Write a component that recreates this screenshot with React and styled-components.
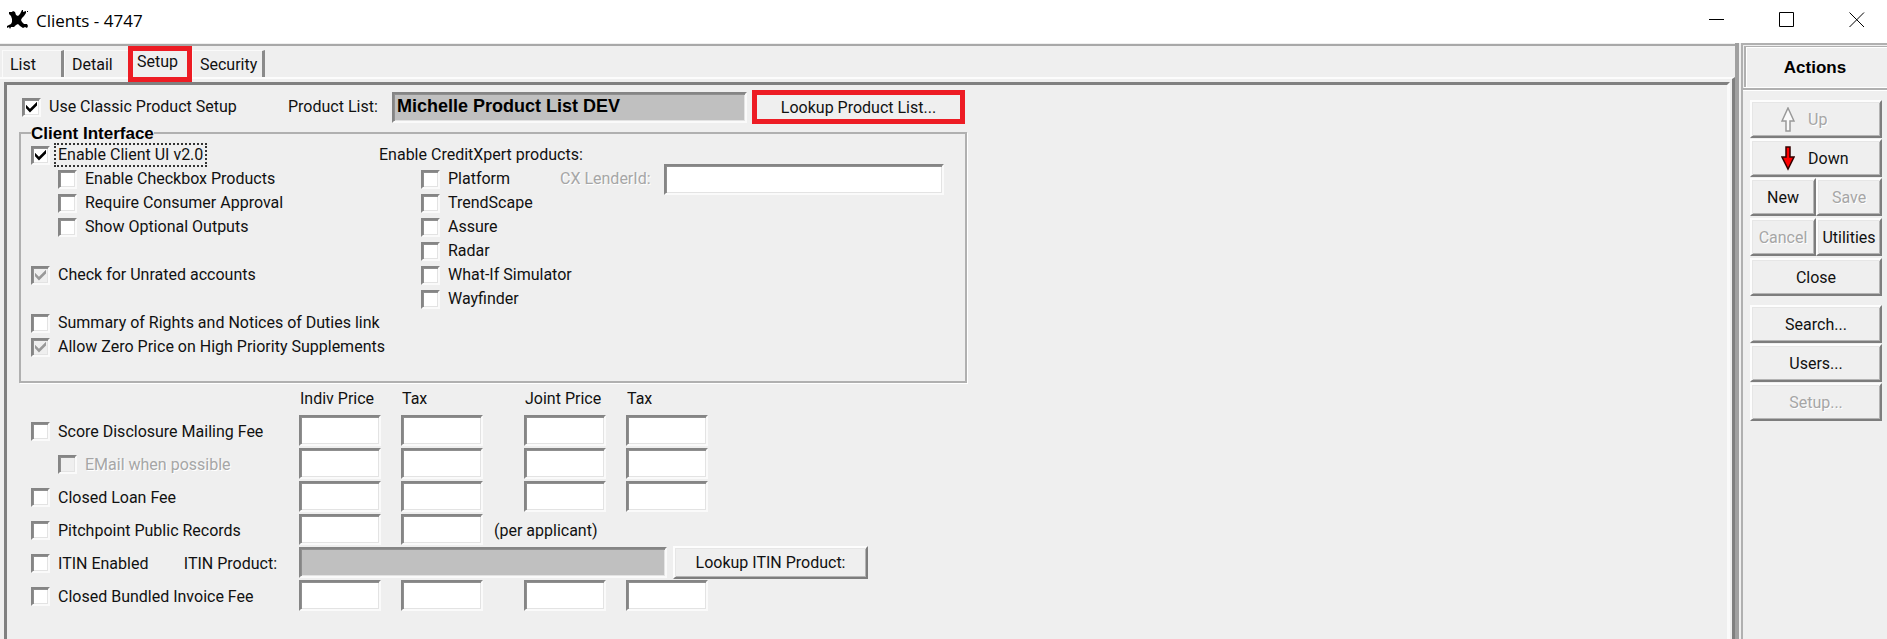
import React from 'react';
import styled, { createGlobalStyle, css } from 'styled-components';

const Global = createGlobalStyle`
  *, *::before, *::after { box-sizing: border-box; }
  body { margin: 0; background: #efefef; }
  body, button, input { font-family: Roboto, "Liberation Sans", sans-serif; font-size: 16px; line-height: 20px; color: #111; }
`;

const sunken = css`
  border: 2px solid;
  border-color: #858585 #fafafa #fafafa #858585;
  box-shadow: inset 1px 1px 0 #8f8f8f, inset -1px -1px 0 #e3e3e3;
`;

const raised = css`
  border: 2px solid;
  border-color: #fdfdfd #7d7d7d #7d7d7d #fdfdfd;
  box-shadow: inset 1px 1px 0 #e6e6e6, inset -1px -1px 0 #b4b4b4;
`;

const Window = styled.div`
  display: flex;
  flex-direction: column;
  min-height: 100vh;
`;

const TitleBar = styled.header`
  display: flex;
  align-items: center;
  height: 43px;
  padding: 0 22px 4px 7px;
  background: #fff;
`;

const Title = styled.h1`
  flex: 1;
  margin: 2px 0 0 7px;
  font: 400 17px/24px "Open Sans", sans-serif;
  color: #000;
`;

const WindowControls = styled.div`
  display: flex;
  gap: 54px;
`;

const IconButton = styled.button`
  display: flex;
  padding: 0;
  border: 0;
  background: none;
`;

const Workspace = styled.div`
  display: flex;
  flex: 1;
`;

const Main = styled.main`
  display: flex;
  flex: 1;
  flex-direction: column;
  min-width: 0;
  margin-top: 1px;
  border-top: 2px solid #a8a8a8;
`;

const TabList = styled.div`
  display: flex;
  align-items: flex-end;
  height: 31px;
  padding-left: 2px;
`;

const Tab = styled.button`
  height: 27px;
  width: ${(p) => p.$width}px;
  padding: 1px 0 0 7px;
  border: solid;
  border-width: 1px 3px 0 1px;
  border-color: #fafafa #8a8a8a #fafafa #fafafa;
  background: none;
  text-align: left;
  ${(p) => p.$plain && css`border-right: 0;`}
  ${(p) => p.$active && css`
    height: 36px;
    margin-bottom: -5px;
    padding: 0 4px 4px 4px;
    border: 5px solid #ed1c24;
    background: #efefef;
    z-index: 1;
  `}
`;

const TabFrame = styled.div`
  display: flex;
  flex: 1;
  padding: 3px 2px 0 4px;
  border-top: 2px solid #fcfcfc;
  border-right: 3px solid #7f7f7f;
`;

const Panel = styled.section`
  flex: 1;
  padding: 5px 12px 0 12px;
  border: solid;
  border-width: 3px 3px 0 3px;
  border-color: #808080 #fafafa #fafafa #808080;
`;

const ProductRow = styled.div`
  display: flex;
  align-items: center;
  height: 34px;
  padding-left: 3px;
`;

const CheckLabel = styled.label`
  display: flex;
  align-items: center;
  gap: 6px;
  height: 24px;
  margin-left: ${(p) => (p.$indent ? 27 : 0)}px;
  white-space: nowrap;
  ${(p) => p.$muted && css`color: #a6a6a6; text-shadow: 1px 1px 0 #fff;`}
`;

const CheckText = styled.span`
  padding: 0 2px;
  ${(p) => p.$focused && css`outline: 2px dotted #333; outline-offset: 0;`}
`;

const CheckBox = styled.input`
  ${sunken}
  display: flex;
  align-items: center;
  justify-content: center;
  flex: none;
  appearance: none;
  width: 19px;
  height: 19px;
  margin: 0;
  background: #fff;
  &:checked::before {
    content: "";
    width: 11px;
    height: 11px;
    background: #000;
    clip-path: polygon(0 30%, 0 62%, 36% 100%, 100% 36%, 100% 2%, 36% 66%);
  }
  &:disabled { background: #efefef; }
  &:disabled::before { background: #999; }
`;

const ProductLabel = styled.label`
  width: 104px;
  margin-left: auto;
`;

const ProductHead = styled.div`
  display: flex;
  align-items: center;
  width: 370px;
`;

const Field = styled.input`
  ${sunken}
  height: 31px;
  width: ${(p) => p.$width}px;
  padding: 0 3px;
  background: ${(p) => (p.readOnly ? '#c0c0c0' : '#fff')};
  outline: 0;
`;

const ProductField = styled(Field)`
  padding-bottom: 2px;
  font: 700 18px/20px "Liberation Sans", sans-serif;
  color: #000;
`;

const PushButton = styled.button`
  ${raised}
  height: 33px;
  width: ${(p) => p.$width}px;
  padding: 1px 0 0;
  background: #efefef;
`;

const MarkedButton = styled(PushButton)`
  height: 34px;
  margin-left: 5px;
  border: 5px solid #ed1c24;
  box-shadow: none;
`;

const Group = styled.fieldset`
  display: flex;
  width: 948px;
  height: 259px;
  margin: 0;
  padding: 1px 10px 0;
  border: 2px solid #b0b0b0;
  box-shadow: 1px 1px 0 #fff;
`;

const Legend = styled.legend`
  height: 18px;
  padding: 0;
  font: 700 17px/20px "Liberation Sans", sans-serif;
  color: #000;
`;

const ClientOptions = styled.div`
  width: 348px;
`;

const Spacer = styled.div`
  height: ${(p) => p.$height}px;
`;

const CreditProducts = styled.div`
  flex: 1;
`;

const Caption = styled.div`
  height: 24px;
  line-height: 24px;
`;

const CreditBody = styled.div`
  display: flex;
  padding-left: 42px;
`;

const CreditChecks = styled.div`
  width: 139px;
`;

const LenderField = styled.div`
  display: flex;
  align-items: center;
  height: 24px;
`;

const LenderLabel = styled.label`
  width: 104px;
  color: #a6a6a6;
  text-shadow: 1px 1px 0 #fff;
`;

const Fees = styled.div`
  display: flex;
  flex-direction: column;
  gap: 2px;
  padding: 4px 0 0 12px;
`;

const FeeRow = styled.div`
  display: flex;
  align-items: center;
  height: 31px;
`;

const FeeHead = styled.div`
  display: flex;
  height: 26px;
  line-height: 24px;
`;

const FeeName = styled.div`
  display: flex;
  align-items: center;
  width: 268px;
  padding-top: 2px;
`;

const PricePair = styled.div`
  display: flex;
  gap: 20px;
  width: 225px;
`;

const ColumnHead = styled.span`
  width: 82px;
  padding-left: 1px;
`;

const Note = styled.span`
  margin-left: -30px;
  padding-top: 2px;
`;

const ItinLabel = styled.label`
  margin-left: auto;
  margin-right: 22px;
`;

const ItinButton = styled(PushButton)`
  margin-left: 6px;
`;

const Sidebar = styled.aside`
  width: 152px;
  border-left: 4px solid #a0a0a0;
  padding-left: 2px;
`;

const SidebarInner = styled.div`
  height: 100%;
  border: solid #b0b0b0;
  border-width: 2px 0 0 2px;
`;

const ActionsHead = styled.div`
  height: 45px;
  padding: 1px 0 0 1px;
  border-bottom: 2px solid #b0b0b0;
  box-shadow: 0 1px 0 #fff;
`;

const ActionsTitle = styled.h2`
  height: 41px;
  margin: 0;
  padding: 0 3px 0 0;
  border: solid #b0b0b0;
  border-width: 1px 0 0 2px;
  box-shadow: inset 1px 1px 0 #fff, 0 1px 0 #fff;
  font: 700 17px/42px "Liberation Sans", sans-serif;
  text-align: center;
  color: #000;
`;

const ActionStack = styled.div`
  display: flex;
  flex-direction: column;
  gap: 1px;
  padding: 10px 5px 0 7px;
`;

const ActionPair = styled.div`
  display: flex;
  padding-bottom: 1px;
`;

const ActionButton = styled(PushButton)`
  display: flex;
  align-items: center;
  justify-content: center;
  gap: 13px;
  flex: 1 0 auto;
  min-width: 66px;
  height: 38px;
  &:disabled { color: #a6a6a6; text-shadow: 1px 1px 0 #fff; }
`;

const MoveLabel = styled.span`
  min-width: 43px;
  text-align: left;
`;

function Check({ children, indent, muted, focused, ...rest }) {
  return (
    <CheckLabel $indent={indent} $muted={muted}>
      <CheckBox type="checkbox" {...rest} />
      <CheckText $focused={focused}>{children}</CheckText>
    </CheckLabel>
  );
}

function Prices({ name }) {
  return (
    <PricePair>
      <Field $width={82} aria-label={`${name} price`} />
      <Field $width={82} aria-label={`${name} tax`} />
    </PricePair>
  );
}

const creditProducts = ['Platform', 'TrendScape', 'Assure', 'Radar', 'What-If Simulator', 'Wayfinder'];

export default function App() {
  return (
    <Window>
      <Global />
      <TitleBar>
        <svg width="22" height="20" viewBox="0 0 22 20" aria-hidden="true">
          <path d="M2 2 L5 2 L6 1 L8 2 L9 5 L11 6 L13 4 L15 0 L16 0 L16 2 L19 1 L19 3 L17 6 L15 8 L14 10 L15 12 L17 14 L20 14 L21 16 L20 18 L18 17 L16 18 L13 16 L11 14 L9 15 L7 17 L4 17 L3 19 L2 17 L0 18 L0 16 L4 14 L5 12 L5 9 L4 6 L2 4 Z M20 1h1v1h-1z" />
        </svg>
        <Title>Clients - 4747</Title>
        <WindowControls>
          <IconButton aria-label="Minimize"><svg width="16" height="16"><path d="M0 7.5H15" stroke="#000" /></svg></IconButton>
          <IconButton aria-label="Maximize"><svg width="16" height="16"><path d="M.5 .5H14.5V14.5H.5Z" fill="none" stroke="#000" /></svg></IconButton>
          <IconButton aria-label="Close window"><svg width="16" height="16"><path d="M.5 .5L15 15M15 .5L.5 15" stroke="#000" /></svg></IconButton>
        </WindowControls>
      </TitleBar>
      <Workspace>
        <Main>
          <TabList role="tablist">
            <Tab role="tab" $width={62}>List</Tab>
            <Tab role="tab" $width={64} $plain>Detail</Tab>
            <Tab role="tab" $width={64} $active aria-selected="true">Setup</Tab>
            <Tab role="tab" $width={73}>Security</Tab>
          </TabList>
          <TabFrame>
            <Panel>
              <ProductRow>
                <ProductHead>
                  <Check defaultChecked>Use Classic Product Setup</Check>
                  <ProductLabel htmlFor="product-list">Product List:</ProductLabel>
                </ProductHead>
                <ProductField id="product-list" $width={355} readOnly defaultValue="Michelle Product List DEV" />
                <MarkedButton $width={213}>Lookup Product List...</MarkedButton>
              </ProductRow>
              <Group>
                <Legend>Client Interface</Legend>
                <ClientOptions>
                  <Check defaultChecked focused>Enable Client UI v2.0</Check>
                  <Check indent>Enable Checkbox Products</Check>
                  <Check indent>Require Consumer Approval</Check>
                  <Check indent>Show Optional Outputs</Check>
                  <Spacer $height={24} />
                  <Check defaultChecked disabled>Check for Unrated accounts</Check>
                  <Spacer $height={24} />
                  <Check>Summary of Rights and Notices of Duties link</Check>
                  <Check defaultChecked disabled>Allow Zero Price on High Priority Supplements</Check>
                </ClientOptions>
                <CreditProducts>
                  <Caption>Enable CreditXpert products:</Caption>
                  <CreditBody>
                    <CreditChecks>
                      {creditProducts.map((name) => <Check key={name}>{name}</Check>)}
                    </CreditChecks>
                    <LenderField>
                      <LenderLabel htmlFor="lender-id">CX LenderId:</LenderLabel>
                      <Field id="lender-id" $width={280} />
                    </LenderField>
                  </CreditBody>
                </CreditProducts>
              </Group>
              <Fees>
                <FeeHead>
                  <FeeName />
                  <PricePair><ColumnHead>Indiv Price</ColumnHead><ColumnHead>Tax</ColumnHead></PricePair>
                  <PricePair><ColumnHead>Joint Price</ColumnHead><ColumnHead>Tax</ColumnHead></PricePair>
                </FeeHead>
                <FeeRow>
                  <FeeName><Check>Score Disclosure Mailing Fee</Check></FeeName>
                  <Prices name="Score disclosure individual" />
                  <Prices name="Score disclosure joint" />
                </FeeRow>
                <FeeRow>
                  <FeeName><Check indent muted disabled>EMail when possible</Check></FeeName>
                  <Prices name="Email individual" />
                  <Prices name="Email joint" />
                </FeeRow>
                <FeeRow>
                  <FeeName><Check>Closed Loan Fee</Check></FeeName>
                  <Prices name="Closed loan individual" />
                  <Prices name="Closed loan joint" />
                </FeeRow>
                <FeeRow>
                  <FeeName><Check>Pitchpoint Public Records</Check></FeeName>
                  <Prices name="Public records" />
                  <Note>(per applicant)</Note>
                </FeeRow>
                <FeeRow>
                  <FeeName>
                    <Check>ITIN Enabled</Check>
                    <ItinLabel htmlFor="itin-product">ITIN Product:</ItinLabel>
                  </FeeName>
                  <Field id="itin-product" $width={368} readOnly />
                  <ItinButton $width={195}>Lookup ITIN Product:</ItinButton>
                </FeeRow>
                <FeeRow>
                  <FeeName><Check>Closed Bundled Invoice Fee</Check></FeeName>
                  <Prices name="Closed bundled individual" />
                  <Prices name="Closed bundled joint" />
                </FeeRow>
              </Fees>
            </Panel>
          </TabFrame>
        </Main>
        <Sidebar>
          <SidebarInner>
            <ActionsHead><ActionsTitle>Actions</ActionsTitle></ActionsHead>
            <ActionStack>
              <ActionButton disabled>
                <svg width="14" height="25"><path d="M7 1L13 14H9V24H5V14H1Z" fill="#fafafa" stroke="#999" strokeWidth="1.5" /></svg>
                <MoveLabel>Up</MoveLabel>
              </ActionButton>
              <ActionButton>
                <svg width="14" height="25"><path d="M5 1H9V11H13L7 23L1 11H5Z" fill="#f00" stroke="#300" strokeWidth="1.5" /></svg>
                <MoveLabel>Down</MoveLabel>
              </ActionButton>
              <ActionPair><ActionButton>New</ActionButton><ActionButton disabled>Save</ActionButton></ActionPair>
              <ActionPair><ActionButton disabled>Cancel</ActionButton><ActionButton>Utilities</ActionButton></ActionPair>
              <ActionButton>Close</ActionButton>
              <Spacer $height={7} />
              <ActionButton>Search...</ActionButton>
              <ActionButton>Users...</ActionButton>
              <ActionButton disabled>Setup...</ActionButton>
            </ActionStack>
          </SidebarInner>
        </Sidebar>
      </Workspace>
    </Window>
  );
}
